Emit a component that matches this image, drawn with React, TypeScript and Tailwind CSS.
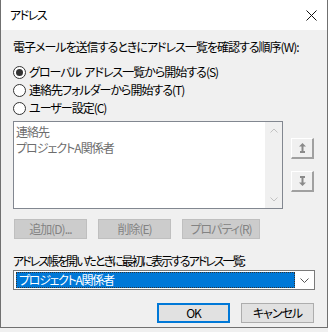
import React from 'react';

const jp = "font-['Noto_Sans_CJK_JP','Noto_Sans',sans-serif] [font-feature-settings:'palt']";

function Radio({ checked, label }: { checked?: boolean; label: string }) {
    return (
        <div className="flex items-center h-[18px]">
            <span className="w-[13px] h-[13px] rounded-full border border-[#333] bg-white flex items-center justify-center">
                {checked && <span className="w-[7px] h-[7px] rounded-full bg-[#333]" />}
            </span>
            <span className="ml-[3px] leading-[16px] whitespace-pre">{label}</span>
        </div>
    );
}

function MoveButton({ down }: { down?: boolean }) {
    return (
        <div className="w-[23px] h-[21px] bg-[#f0f0f0] border-t border-l border-white border-b-2 border-r-2 border-b-[#a0a0a0] border-r-[#a0a0a0] flex items-center justify-center">
            <svg width="7" height="10" viewBox="0 0 7 10" className={down ? 'rotate-180' : ''}>
                <path d="M3.5 0 L7 3.5 L4.5 3.5 L4.5 8 L6 8 L6 10 L1 10 L1 8 L2.5 8 L2.5 3.5 L0 3.5 Z" fill="#8a8a8a" />
            </svg>
        </div>
    );
}

function DisabledButton({ label, w }: { label: string; w: string }) {
    return (
        <div className={`${w} h-[20px] bg-[#cccccc] border border-[#bfbfbf] text-[#838383] flex items-center justify-center leading-none whitespace-nowrap`}>
            {label}
        </div>
    );
}

export default function App() {
    return (
        <div className={`w-[328px] h-[332px] bg-[#f0f0f0] text-[12px] tracking-[-1px] text-black ${jp}`}>
            <div className="h-[328px] border border-[#707070] border-t-0 flex flex-col">
                {/* Title bar */}
                <div className="h-[30px] bg-white flex items-center justify-between pl-[9px] pr-[10px]">
                    <span className="leading-[16px] tracking-[-1.5px]">アドレス</span>
                    <svg width="11" height="11" viewBox="0 0 11 11">
                        <path d="M0.5 0.5 L10.5 10.5 M10.5 0.5 L0.5 10.5" stroke="#111" strokeWidth="1" />
                    </svg>
                </div>

                <div className="flex-1 flex flex-col px-[12px] pt-[9px]">
                    <div className="leading-[16px] h-[16px] whitespace-nowrap">電子メールを送信するときにアドレス一覧を確認する順序(W):</div>

                    <div className="mt-[8px] flex flex-col">
                        <Radio checked label="グローバル  アドレス一覧から開始する(S)" />
                        <Radio label="連絡先フォルダーから開始する(T)" />
                        <Radio label="ユーザー設定(C)" />
                    </div>

                    <div className="mt-[4px] flex">
                        {/* List box */}
                        <div className="w-[270px] h-[88px] border border-[#828790] bg-white flex">
                            <div className="flex-1 pl-[2px] pt-[2px] text-[#6d6d6d] leading-[16px]">
                                <div>連絡先</div>
                                <div>プロジェクトA関係者</div>
                            </div>
                            <div className="w-[17px] bg-[#f0f0f0] flex flex-col items-center justify-between py-[6px]">
                                <svg width="8" height="5" viewBox="0 0 8 5">
                                    <path d="M0.5 4.5 L4 1 L7.5 4.5" stroke="#c2c2c2" fill="none" />
                                </svg>
                                <svg width="8" height="5" viewBox="0 0 8 5">
                                    <path d="M0.5 0.5 L4 4 L7.5 0.5" stroke="#c2c2c2" fill="none" />
                                </svg>
                            </div>
                        </div>
                        <div className="ml-[8px] pt-[17px] flex flex-col gap-[12px]">
                            <MoveButton />
                            <MoveButton down />
                        </div>
                    </div>

                    <div className="mt-[10px] ml-[1px] flex gap-[11px]">
                        <DisabledButton label="追加(D)..." w="w-[73px]" />
                        <DisabledButton label="削除(E)" w="w-[73px]" />
                        <DisabledButton label="プロパティ(R)" w="w-[78px]" />
                    </div>

                    <div className="mt-[14px] leading-[16px] h-[16px] whitespace-nowrap tracking-[-2px]">アドレス帳を開いたときに最初に表示するアドレス一覧:</div>

                    {/* Combo box */}
                    <div className="mt-[1px] h-[20px] border border-[#7a7a7a] bg-white flex items-center pl-[2px]">
                        <div className="w-[279px] h-[16px] bg-[#0078d7] text-white leading-[14px] border border-dotted border-[#333] pl-[2px] whitespace-nowrap tracking-[-1.3px]">
                            プロジェクトA関係者
                        </div>
                        <div className="flex-1 flex items-center justify-center">
                            <svg width="9" height="5" viewBox="0 0 9 5">
                                <path d="M0.5 0.5 L4.5 4.5 L8.5 0.5" stroke="#555" fill="none" />
                            </svg>
                        </div>
                    </div>

                    <div className="mt-[13px] flex justify-end gap-[11px] pr-[1px]">
                        <div className="w-[73px] h-[20px] bg-[#e1e1e1] border-2 border-[#0078d7] flex items-center justify-center leading-none">OK</div>
                        <div className="w-[73px] h-[20px] bg-[#e1e1e1] border border-[#adadad] flex items-center justify-center leading-none">キャンセル</div>
                    </div>
                </div>
            </div>
        </div>
    );
}
